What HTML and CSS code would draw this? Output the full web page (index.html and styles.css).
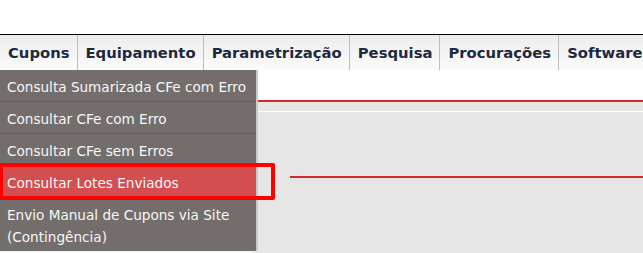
FILE: index.html
```html
<!DOCTYPE html>
<html lang="pt">
<head>
<meta charset="utf-8">
<title>Menu Cupons</title>
<link rel="stylesheet" href="styles.css">
</head>
<body>
<div class="top"></div>
<nav class="menubar">
  <div class="menu-item">Cupons</div>
  <div class="menu-item">Equipamento</div>
  <div class="menu-item">Parametrização</div>
  <div class="menu-item">Pesquisa</div>
  <div class="menu-item">Procurações</div>
  <div class="menu-item">Software</div>
</nav>
<main class="stage">
  <div class="content">
    <div class="panel">
      <div class="panel-inner">
        <div class="pointer-line"></div>
      </div>
    </div>
  </div>
  <ul class="dropdown">
    <li class="drop-item">Consulta Sumarizada CFe com Erro</li>
    <li class="drop-item">Consultar CFe com Erro</li>
    <li class="drop-item">Consultar CFe sem Erros</li>
    <li class="drop-item active">Consultar Lotes Enviados</li>
    <li class="drop-item multi">Envio Manual de Cupons via Site (Contingência)</li>
  </ul>
  <div class="highlight-box"></div>
</main>
</body>
</html>
```

FILE: styles.css
```css
* { box-sizing: border-box; }
html, body {
  margin: 0;
  padding: 0;
  background: #ffffff;
  font-family: "DejaVu Sans", Verdana, sans-serif;
  overflow: hidden;
}
.top {
  height: 35px;
  border-bottom: 1px solid #000000;
}
.menubar {
  display: flex;
  height: 35px;
  background: linear-gradient(#ededed, #fbfbfb);
  white-space: nowrap;
}
.menu-item {
  padding: 0 7px 0 8px;
  line-height: 35px;
  font-size: 14.8px;
  font-weight: bold;
  color: #1d2940;
  border-right: 1px solid #bdbdbd;
}
.stage {
  position: relative;
  height: 183px;
}
.content {
  padding-top: 30px;
}
.panel {
  margin-left: 252px;
  border-top: 2px solid #d8272c;
  border-top-left-radius: 6px;
  background: #e6e6e6;
  height: 160px;
  padding-top: 9px;
}
.panel-inner {
  border-top: 1px solid #ffffff;
  padding-top: 64px;
  padding-left: 38px;
}
.pointer-line {
  height: 2px;
  background: #d0282d;
}
.dropdown {
  position: absolute;
  top: 0;
  left: 0;
  width: 258px;
  margin: 0;
  padding: 0;
  list-style: none;
  background: #736e6c;
  border-right: 2px solid #c9c9c9;
  border-bottom: 1px solid #f2f2f2;
}
.drop-item {
  height: 32px;
  padding: 4px 7px 0;
  line-height: 27px;
  font-size: 13.6px;
  color: #f7f7f7;
  border-bottom: 1px solid #66615f;
  white-space: nowrap;
}
.drop-item.active {
  background: #d34e50;
}
.drop-item.multi {
  height: auto;
  line-height: 22px;
  padding: 6px 7px 3px;
  border-bottom: none;
  white-space: normal;
}
.highlight-box {
  position: absolute;
  top: 93px;
  left: -1px;
  width: 276px;
  height: 37px;
  border: 4px solid #ff0000;
  border-radius: 2px;
}
```
